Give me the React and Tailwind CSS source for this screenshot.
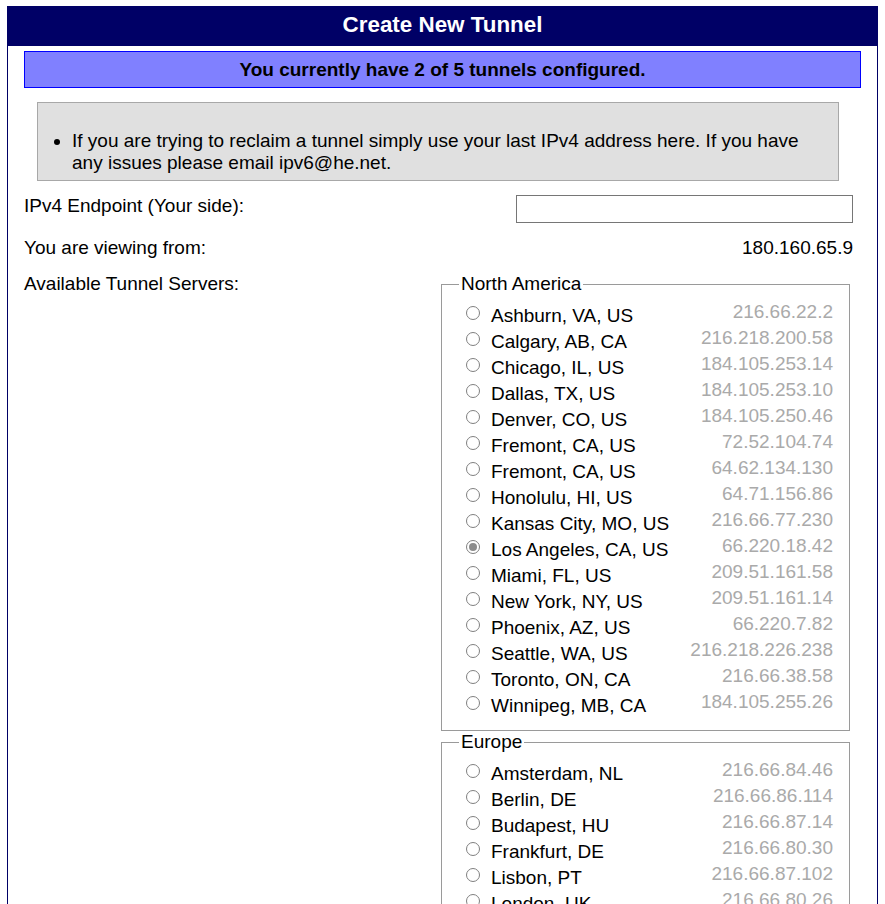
import { useState } from "react";

const regions = [
  {
    name: "North America",
    servers: [
      ["Ashburn, VA, US", "216.66.22.2"],
      ["Calgary, AB, CA", "216.218.200.58"],
      ["Chicago, IL, US", "184.105.253.14"],
      ["Dallas, TX, US", "184.105.253.10"],
      ["Denver, CO, US", "184.105.250.46"],
      ["Fremont, CA, US", "72.52.104.74"],
      ["Fremont, CA, US", "64.62.134.130"],
      ["Honolulu, HI, US", "64.71.156.86"],
      ["Kansas City, MO, US", "216.66.77.230"],
      ["Los Angeles, CA, US", "66.220.18.42"],
      ["Miami, FL, US", "209.51.161.58"],
      ["New York, NY, US", "209.51.161.14"],
      ["Phoenix, AZ, US", "66.220.7.82"],
      ["Seattle, WA, US", "216.218.226.238"],
      ["Toronto, ON, CA", "216.66.38.58"],
      ["Winnipeg, MB, CA", "184.105.255.26"],
    ],
  },
  {
    name: "Europe",
    servers: [
      ["Amsterdam, NL", "216.66.84.46"],
      ["Berlin, DE", "216.66.86.114"],
      ["Budapest, HU", "216.66.87.14"],
      ["Frankfurt, DE", "216.66.80.30"],
      ["Lisbon, PT", "216.66.87.102"],
      ["London, UK", "216.66.80.26"],
      ["London, UK", "216.66.88.98"],
      ["Paris, FR", "216.66.84.42"],
      ["Prague, CZ", "216.66.86.122"],
      ["Stockholm, SE", "216.66.80.90"],
      ["Warsaw, PL", "216.66.80.162"],
      ["Zurich, CH", "216.66.80.98"],
    ],
  },
];

// gray radio circle, checked one gets a filled dot
function Radio({ checked }) {
  return (
    <span className="mt-[5px] mr-[11px] flex h-[14px] w-[14px] shrink-0 items-center justify-center rounded-full border border-[#808080] bg-white">
      {checked && <span className="h-[8px] w-[8px] rounded-full bg-[#8c8c8c]" />}
    </span>
  );
}

export default function App() {
  const [selected, setSelected] = useState("66.220.18.42");
  const [endpoint, setEndpoint] = useState("");

  return (
    <div className="min-h-screen bg-white px-[7px] pt-[6px] font-['Liberation_Sans',Arial,sans-serif] text-[19px] text-black">
      <div className="min-h-[920px] border border-b-0 border-[#000066] pb-[20px]">
        <div className="h-[39px] bg-[#000066] pt-[5px] text-center text-[22.4px] font-bold leading-[26px] text-white">
          Create New Tunnel
        </div>

        <div className="ml-[16px] mt-[5px] h-[37px] w-[837px] border border-[#0000ff] bg-[#8080ff] text-center font-bold leading-[35px]">
          You currently have 2 of 5 tunnels configured.
        </div>

        <div className="ml-[29px] mt-[14px] h-[79px] w-[802px] border border-[#a8a8a8] bg-[#e0e0e0] pt-[27px]">
          <ul className="list-disc pl-[34px] pr-[19px] leading-[22px]">
            <li>
              If you are trying to reclaim a tunnel simply use your last IPv4 address here. If you have any issues please
              email ipv6@he.net.
            </li>
          </ul>
        </div>

        <div className="pl-[16px] pr-[24px]">
          <div className="mt-[14px] flex items-start justify-between">
            <span className="leading-[22px]">IPv4 Endpoint (Your side):</span>
            <input
              type="text"
              value={endpoint}
              onChange={(e) => setEndpoint(e.target.value)}
              className="h-[28px] w-[337px] border border-[#767676] bg-white px-[4px] text-[16px] outline-none"
            />
          </div>

          <div className="mt-[14px] flex justify-between leading-[22px]">
            <span>You are viewing from:</span>
            <span>180.160.65.9</span>
          </div>

          <div className="mt-[14px] flex items-start justify-between">
            <span className="leading-[22px]">Available Tunnel Servers:</span>
            <div className="mr-[3px] w-[409px]">
              {regions.map((region) => (
                <fieldset key={region.name} className="m-0 border border-[#9a9a9a] p-0">
                  <legend className="ml-[17px] px-[2px] leading-[22px]">{region.name}</legend>
                  <div className="pb-[13px] pl-[24px] pr-[16px] pt-[6px]">
                    {region.servers.map(([city, ip]) => (
                      <label
                        key={ip}
                        className="flex h-[26px] cursor-pointer items-start justify-between"
                        onClick={() => setSelected(ip)}
                      >
                        <span className="flex items-start">
                          <Radio checked={selected === ip} />
                          <span className="pt-[4px] leading-[22px]">{city}</span>
                        </span>
                        <span className="leading-[22px] text-[#aaaaaa]">{ip}</span>
                      </label>
                    ))}
                  </div>
                </fieldset>
              ))}
            </div>
          </div>
        </div>
      </div>
    </div>
  );
}
